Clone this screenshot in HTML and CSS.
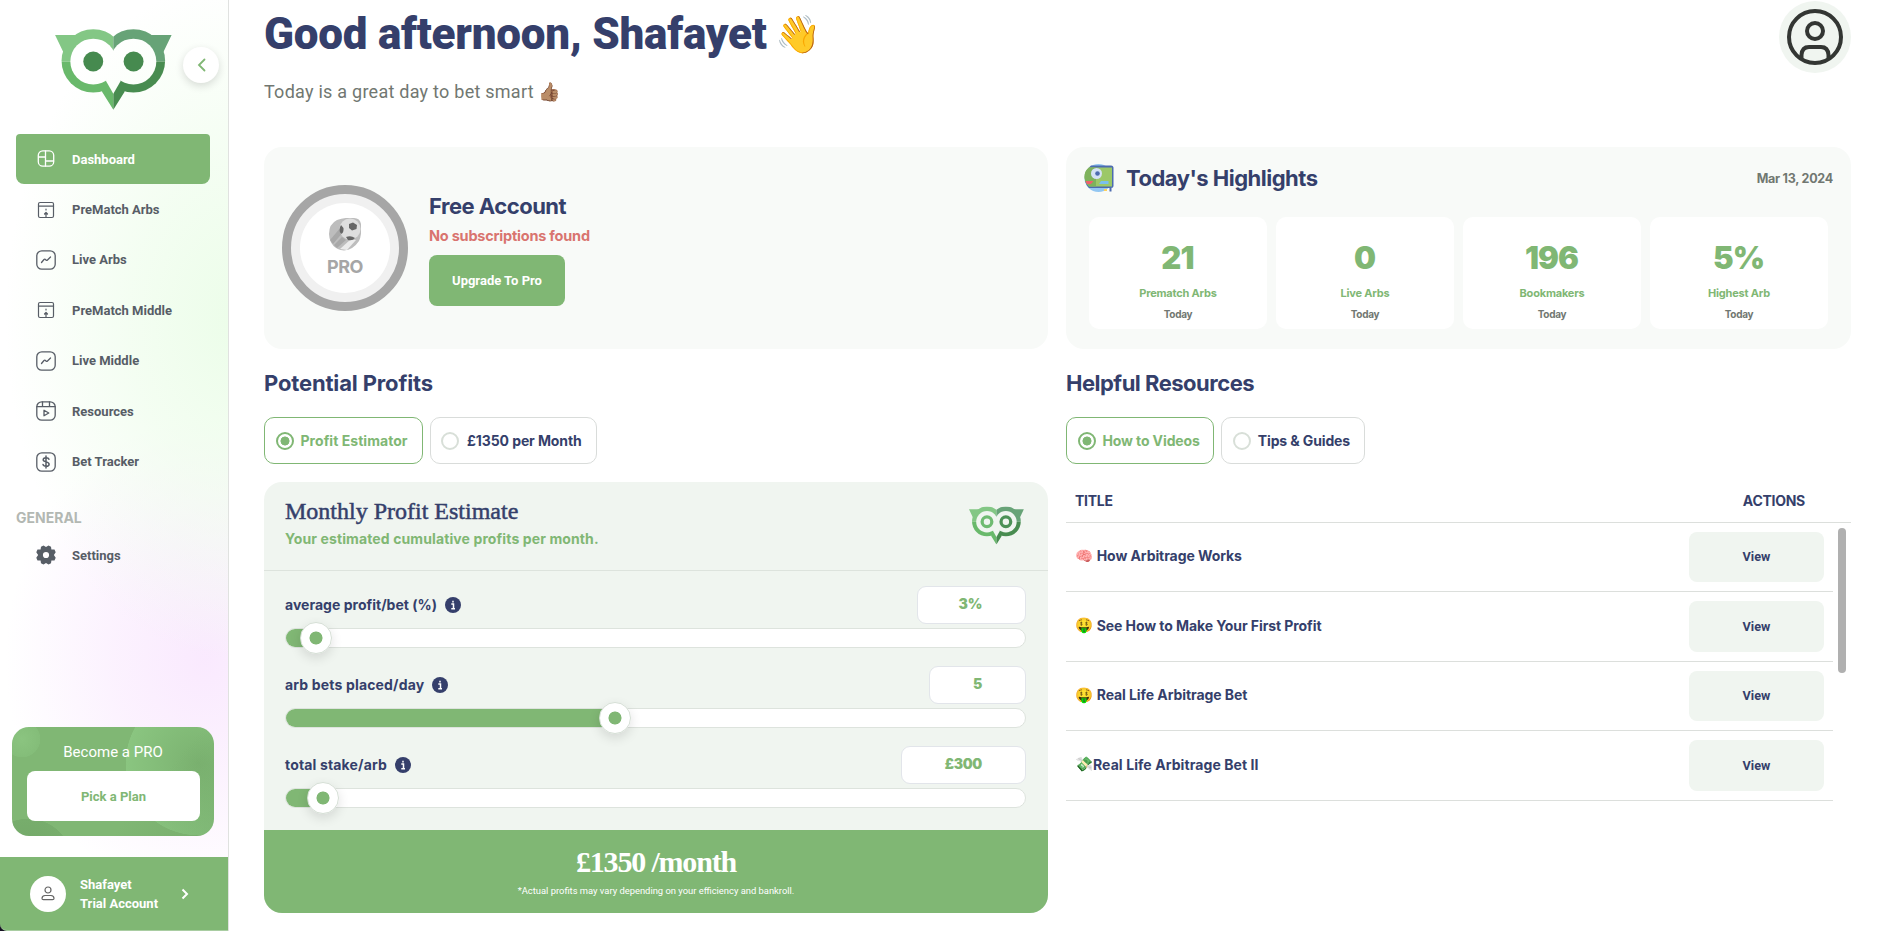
FILE: index.html
```
<!DOCTYPE html>
<html lang="en">
<head>
<meta charset="utf-8">
<title>Dashboard</title>
<link rel="stylesheet" href="styles.css">
</head>
<body>
<svg width="0" height="0" class="defs" aria-hidden="true">
  <defs>
    <mask id="owl-shape" maskUnits="userSpaceOnUse" x="160" y="80" width="360" height="255">
      <g fill="#fff">
        <circle cx="280" cy="182" r="95.500"/><circle cx="401" cy="182" r="95.500"/>
        <path d="M165 104H245L190 156ZM516 104H436L491 156ZM306 274L340.500 329L375 274L340 230Z"/>
      </g>
      <g fill="#000">
        <circle cx="280" cy="184" r="69"/><circle cx="401" cy="184" r="69"/>
        <path d="M318 242L340.500 281L363 242L340.500 190Z"/>
      </g>
    </mask>
    <symbol id="owl-body" viewBox="165 86 352 244">
      <g mask="url(#owl-shape)">
        <path fill="#83c785" d="M160 80H340.500V184H160Z"/><path fill="#67a377" d="M340.500 80H520V184H340.500Z"/>
        <path fill="#69b96b" d="M160 184H340.500V335H160Z"/><path fill="#488c50" d="M340.500 184H520V335H340.500Z"/>
      </g>
    </symbol>
    <symbol id="i-calendar" viewBox="0 0 20 20">
      <rect x="2.500" y="2.500" width="15" height="15" rx="1.500"/><path d="M2.500 6.200H17.500M10 17V13M8.500 14L10 12.500L11.500 14"/><path d="M10 9v1"/>
    </symbol>
    <symbol id="i-activity" viewBox="0 0 20 20">
      <rect x=".8" y=".8" width="18.400" height="18.400" rx="5"/><path d="M5.500 12.500L8 9.500Q8.800 8.700 9.600 9.700Q10.500 11 11.500 10L14.500 7"/>
    </symbol>
    <symbol id="i-info" viewBox="0 0 16 16">
      <path d="M6.300 7H8.500V11.700M6.300 11.700H10M8 3.700V5.400"/>
    </symbol>
  </defs>
</svg>
<div class="app">
  <aside class="sidebar">
    <div class="brand">
      <svg class="owl" viewBox="165 86 352 244"><use href="#owl-body" x="165" y="86" width="352" height="244"/><circle cx="280" cy="184" r="30" fill="#468a4f"/><circle cx="401.500" cy="184" r="30" fill="#468a4f"/></svg>
      <button class="collapse"><svg viewBox="0 0 12 14" width="12" height="14"><path d="M9.500 1.500L4 7L9.500 12.500"/></svg></button>
    </div>
    <nav class="nav">
      <a class="item active"><svg class="ic" viewBox="0 0 20 20"><rect x="2.300" y="1.800" width="15.400" height="15.400" rx="4.500"/><path d="M9.500 2V17M2.500 8H9.500M9.500 12H17.500"/></svg>Dashboard</a>
      <a class="item"><svg class="ic thin"><use href="#i-calendar"/></svg>PreMatch Arbs</a>
      <a class="item"><svg class="ic"><use href="#i-activity"/></svg>Live Arbs</a>
      <a class="item"><svg class="ic thin"><use href="#i-calendar"/></svg>PreMatch Middle</a>
      <a class="item"><svg class="ic"><use href="#i-activity"/></svg>Live Middle</a>
      <a class="item"><svg class="ic" viewBox="0 0 20 20"><rect x=".8" y=".8" width="18.400" height="18.400" rx="5"/><path d="M1 5.700H19M6.500 1V5.500M13.500 1V5.500M8 9.300V14.800L12.800 12Z"/></svg>Resources</a>
      <a class="item"><svg class="ic" viewBox="0 0 20 20"><rect x=".8" y=".8" width="18.400" height="18.400" rx="5"/><path stroke-width="1.500" d="M13 7.300C12.500 5.500 7.200 5 7.200 7.700C7.200 10.500 13.100 9.200 13.100 12.200C13.100 15 7.400 14.800 7 12.400M10 4V16"/></svg>Bet Tracker</a>
    </nav>
    <div class="group">GENERAL</div>
    <a class="item settings"><svg class="ic gear" viewBox="0 0 20 20"><path fill-rule="evenodd" d="M7.500 .6L10 1.900L12.500 .6L15 1.700L15.400 4.500L18.500 4.600L19.700 7.200L17.900 10L19.700 12.800L18.500 15.400L15.400 15.500L15 18.300L12.500 19.400L10 18.100L7.500 19.400L5 18.300L4.600 15.500L1.500 15.400L.3 12.800L2.100 10L.3 7.200L1.500 4.600L4.600 4.500L5 1.700ZM10 6.900A3.100 3.100 0 1 0 10 13.100A3.100 3.100 0 1 0 10 6.900Z"/></svg>Settings</a>
    <div class="promo">
      <div class="promo-title">Become a PRO</div>
      <button class="plan">Pick a Plan</button>
    </div>
    <div class="account">
      <span class="face"><svg viewBox="0 0 14 16" width="14" height="16"><circle cx="7" cy="4" r="3"/><path d="M4 9.500H10Q13 9.700 13 12.500Q13 13.700 11.500 13.700H2.500Q1 13.700 1 12.500Q1 9.700 4 9.500Z"/></svg></span>
      <div class="who">Shafayet<br>Trial Account</div>
      <svg class="next" viewBox="0 0 8 12" width="8" height="12"><path d="M1.500 1.500L6 6L1.500 10.500"/></svg>
    </div>
  </aside>

  <main class="main">
    <header class="top">
      <div>
        <h1>Good afternoon, Shafayet <span class="wave">👋</span></h1>
        <p class="sub">Today is a great day to bet smart <span class="thumb-up">👍🏽</span></p>
      </div>
      <span class="avatar"><svg viewBox="0 0 56 56" width="56" height="56"><circle cx="28" cy="28" r="26"/><circle cx="28" cy="22" r="8"/><path d="M14.500 49.500V46Q15 38 22 38H34Q41 38 41.500 46V49.500"/></svg></span>
    </header>

    <section class="grid">
      <div class="card plan-card">
        <div class="badge"><div class="badge-in">
          <svg viewBox="0 0 32 33" width="32" height="33"><path fill="#bdbdbd" d="M0 16Q0 6 8 2Q17-1 25 0Q31 0 32 6Q33 17 30 23Q24 32 15 32.500Q1 31 0 16Z"/><path fill="#a8a8a8" d="M1 22L12 9L15 13L4 26ZM5 27L13 19L17 22L8 30Z"/><path fill="#ececec" d="M11 31L22 21L27 22L18 32Z"/><circle cx="21" cy="11" r="10.500" fill="#dedede"/><path fill="#666" d="M20 6L24 4.500L28 7L27.500 11L23 12.500L20 10ZM12 7Q9 12 12 16Q15 15 14.500 10ZM17 19Q22 17 26 20Q24 23 19 22Z"/></svg>
          <b>PRO</b></div></div>
        <div class="plan-info">
          <h2>Free Account</h2>
          <p class="warn">No subscriptions found</p>
          <button class="upgrade">Upgrade To Pro</button>
        </div>
      </div>
      <div class="card highlights">
        <div class="hl-head">
          <svg viewBox="0 0 30 30" width="30" height="30"><circle cx="14.500" cy="15" r="14" fill="#93c7f2"/><path fill="#4c6bb0" d="M7 2.500H27Q29.500 2.500 29.500 5V22.500Q29.500 25 27 25H5Q2 22 1 18L2 8Z"/><path fill="#9cc868" d="M5 4.500H28V23.500H5Q.5 19 .5 14Q.5 8 5 4.500Z"/><path fill="#7eb25c" d="M5 4.500H12V23.500H5Q.5 19 .5 14Q.5 8 5 4.500Z"/><circle cx="12.500" cy="10.500" r="5.500" fill="#d4e2f5"/><circle cx="13.500" cy="10.500" r="2.300" fill="#4c6bb0"/><path fill="#f0616d" d="M1.500 18H9.500L7 21H2.800Z"/><path fill="#79c0ee" d="M17 18H24.500V21H15Z"/><path fill="#4c6bb0" d="M25.500 25H27.500V28.500H25.500Z"/><path fill="#ffd15c" d="M20 26H23V28H20Z"/></svg>
          <h2>Today's Highlights</h2><span class="date">Mar 13, 2024</span>
        </div>
        <div class="stats">
          <div class="stat"><b>21</b><i>Prematch Arbs</i><em>Today</em></div>
          <div class="stat"><b>0</b><i>Live Arbs</i><em>Today</em></div>
          <div class="stat"><b>196</b><i>Bookmakers</i><em>Today</em></div>
          <div class="stat"><b>5%</b><i>Highest Arb</i><em>Today</em></div>
        </div>
      </div>
    </section>

    <section class="grid">
      <div>
        <h2 class="sec first">Potential Profits</h2>
        <div class="tabs wide"><span class="tab on"><i class="radio"></i>Profit Estimator</span><span class="tab"><i class="radio"></i>£1350 per Month</span></div>
        <div class="panel">
          <div class="panel-head">
            <div><h3>Monthly Profit Estimate</h3><p>Your estimated cumulative profits per month.</p></div>
            <svg class="owl-small" viewBox="165 86 352 244"><use href="#owl-body" x="165" y="86" width="352" height="244"/><circle cx="280" cy="184" r="31" fill="none" stroke="#6fbb71" stroke-width="21"/><circle cx="401" cy="184" r="31" fill="none" stroke="#4c9156" stroke-width="21"/></svg>
          </div>
          <div class="controls">
            <div class="ctl"><div class="ctl-top"><span>average profit/bet (%)</span><i class="info"><svg><use href="#i-info"/></svg></i><b class="value v-pct">3%</b></div>
              <div class="track"><div class="fill" style="width:30px"><span class="knob"></span></div></div></div>
            <div class="ctl"><div class="ctl-top loose"><span>arb bets placed/day</span><i class="info"><svg><use href="#i-info"/></svg></i><b class="value v-num">5</b></div>
              <div class="track"><div class="fill" style="width:329px"><span class="knob"></span></div></div></div>
            <div class="ctl"><div class="ctl-top loose"><span>total stake/arb</span><i class="info"><svg><use href="#i-info"/></svg></i><b class="value v-cash">£300</b></div>
              <div class="track"><div class="fill" style="width:37px"><span class="knob"></span></div></div></div>
          </div>
          <div class="panel-foot"><strong>£1350 /month</strong><small>*Actual profits may vary depending on your efficiency and bankroll.</small></div>
        </div>
      </div>
      <div>
        <h2 class="sec">Helpful Resources</h2>
        <div class="tabs"><span class="tab on"><i class="radio"></i>How to Videos</span><span class="tab"><i class="radio"></i>Tips &amp; Guides</span></div>
        <div class="thead"><span>TITLE</span><span>ACTIONS</span></div>
        <div class="tbody">
          <div class="rows">
            <div class="row"><span class="emo">🧠</span><span>How Arbitrage Works</span><button>View</button></div>
            <div class="row"><span class="emo">🤑</span><span>See How to Make Your First Profit</span><button>View</button></div>
            <div class="row"><span class="emo">🤑</span><span>Real Life Arbitrage Bet</span><button>View</button></div>
            <div class="row tight"><span class="emo">💸</span><span>Real Life Arbitrage Bet II</span><button>View</button></div>
          </div>
          <div class="scroll"></div>
        </div>
      </div>
    </section>
  </main>
</div>
</body>
</html>
```
FILE: styles.css
```
* { box-sizing: border-box; }
body { margin: 0; background: #fff; font-family: Roboto, "Liberation Sans", sans-serif; color: #353f6b; }
h1, h2, h3, p { margin: 0; }
button { border: 0; padding: 0; font-family: inherit; }
i, em { font-style: normal; }
.defs { position: absolute; }
.app { display: flex; height: 931px; overflow: hidden; }

/* Sidebar */
.sidebar {
  width: 229px; flex: none; display: flex; flex-direction: column;
  border-right: 1px solid #e0e2e0;
  background:
    linear-gradient(#151022, #151022) 0 100% / 8px 8px no-repeat,
    radial-gradient(ellipse 230px 340px at 235px 320px, rgba(234,253,231,.9), rgba(236,253,233,.6) 45%, rgba(240,253,238,0)),
    radial-gradient(ellipse 200px 240px at 205px 660px, rgba(249,231,254,.9), rgba(249,231,254,.55) 45%, rgba(249,231,254,0)),
    #fff;
}
.brand { height: 134px; display: flex; padding: 29px 0 0 55px; }
.owl { width: 117px; height: 81px; }
.collapse { width: 36px; height: 36px; margin: 18px 0 0 11px; border-radius: 50%; background: #fff; box-shadow: 0 3px 9px rgba(0,0,0,.14); display: grid; place-items: center; }
.collapse path { fill: none; stroke: #80b774; stroke-width: 1.8; stroke-linecap: round; }
.nav { padding-left: 16px; height: 354px; }
.item { display: flex; align-items: center; gap: 16px; width: 194px; height: 50.400px; padding-left: 20px; font-size: 13px; font-weight: 700; color: #575d66; }
.item.active { background: #80b774; color: #fff; border-radius: 4px 4px 8px 8px; }
.ic { width: 20px; height: 20px; margin-left: -.5px; margin-right: .5px; fill: none; stroke: currentColor; stroke-width: 1.300; stroke-linejoin: round; stroke-linecap: round; }
.thin { stroke-width: 1.200; }
.ic.gear { fill: currentColor; stroke: none; }
.group { height: 42px; padding: 20px 0 0 16px; font-family: Inter, sans-serif; font-size: 14px; line-height: 20px; font-weight: 700; color: #b3b8b3; }
.settings { margin-left: 16px; }
.promo {
  width: 202px; height: 109px; margin: 147px 0 0 12px; padding: 15px 15px 0; border-radius: 17px; text-align: center;
  background:
    radial-gradient(circle at 10px 12px, #8bc480 0, #84bd79 18px, transparent 18.500px),
    radial-gradient(circle at 16px 136px, #72a767 0, #77ad6c 44px, transparent 44.500px),
    linear-gradient(130deg, transparent 65%, rgba(96,145,88,.25) 100%),
    radial-gradient(circle at 186px 36px, #7bb270 0, #8ac580 72px, transparent 72.500px),
    #80b774;
}
.promo-title { color: #fff; font-size: 15px; line-height: 20px; height: 29px; }
.plan { width: 173px; height: 50px; border-radius: 8px; background: #fff; color: #80b774; font-size: 13px; font-weight: 700; }
.account { height: 74px; margin-top: auto; background: #80b774; border-bottom: 1px solid #a9cda2; border-bottom-left-radius: 7px; display: flex; align-items: center; padding-left: 30px; color: #fff; }
.face { width: 36px; height: 36px; border-radius: 50%; background: #fff; display: grid; place-items: center; }
.face svg { fill: none; stroke: #666; stroke-width: 1.200; }
.who { margin-left: 14px; width: 101px; font-size: 13px; line-height: 19px; font-weight: 700; }
.next { fill: none; stroke: #fff; stroke-width: 2; }

/* Main */
.main { flex: 1; padding: 0 50px 0 35px; }
.top { height: 147px; display: flex; justify-content: space-between; }
h1 { padding-top: 12px; font-size: 44px; line-height: 44px; height: 56px; white-space: nowrap; font-weight: 900; letter-spacing: -.250px; }
.wave { font-size: 37px; margin-left: -2px; vertical-align: 2px; font-weight: 400; line-height: 30px; }
.sub { margin-top: 24px; font-size: 18px; line-height: 24px; letter-spacing: .25px; color: #717771; }
.thumb-up { font-size: 18px; margin-left: -1px; }
.avatar { width: 72px; height: 72px; margin-top: 1px; border-radius: 50%; background: #f0f5f0; display: grid; place-items: center; }
.avatar svg { fill: none; stroke: #333633; stroke-width: 4; }
.grid { display: grid; grid-template-columns: 784px 785px; column-gap: 18px; }
.card { height: 202px; border-radius: 18px; background: #f8faf8; }
h2 { font-family: Inter, sans-serif; font-size: 22px; line-height: 26px; letter-spacing: -.500px; }
.plan-card { display: flex; align-items: center; padding-left: 18px; }
.badge { width: 126px; height: 126px; border-radius: 50%; border: 9px solid #a6a6a6; background: #f0f0f0; padding: 9px; }
.badge-in { width: 90px; height: 90px; border-radius: 50%; background: #fff; display: flex; flex-direction: column; align-items: center; padding-top: 15px; }
.badge b { margin-top: 6px; font-family: Inter, sans-serif; letter-spacing: -.400px; font-size: 18px; line-height: 20px; color: #a6a6a6; }
.plan-info { margin-left: 21px; height: 111px; }
.warn { margin: 7px 0 9px; font-family: Inter, sans-serif; font-size: 14.500px; line-height: 20px; font-weight: 700; letter-spacing: -.220px; color: #d9746f; }
.upgrade { width: 136px; height: 51px; border-radius: 8px; background: #80b774; color: #fff; font-size: 13px; font-weight: 700; display: block; }
.highlights { padding: 16px 18px 0 18px; }
.hl-head { display: flex; align-items: center; height: 30px; }
.hl-head h2 { margin-left: 12px; }
.date { margin-left: auto; font-family: Inter, sans-serif; font-size: 12.500px; letter-spacing: -.250px; font-weight: 700; color: #717771; }
.stats { display: grid; grid-template-columns: repeat(4, 178px); gap: 9px; margin: 24px 0 0 5px; }
.stat { height: 112px; border-radius: 10px; background: #fff; display: flex; flex-direction: column; align-items: center; padding-top: 23px; font-family: Inter, sans-serif; font-weight: 700; color: #80b774; }
.stat b { font-size: 31px; line-height: 36px; letter-spacing: -.900px; margin-left: -1px; }
.stat i { margin-top: 9px; font-size: 11px; line-height: 16px; letter-spacing: -.200px; }
.stat em { margin-top: 5px; font-size: 10px; line-height: 16px; letter-spacing: -.300px; color: #717771; }

.sec { height: 68px; padding-top: 21px; letter-spacing: -.500px; }
.sec.first { letter-spacing: -.150px; }
.tabs { display: flex; gap: 7px; }
.tab { height: 47px; border: 1px solid #d9dcda; border-radius: 10px; padding: 0 13.500px 0 10.500px; display: flex; align-items: center; gap: 7px; font-family: Inter, sans-serif; font-size: 14px; font-weight: 700; letter-spacing: -.120px; }
.wide .tab { padding-right: 14px; letter-spacing: .040px; }
.wide .tab + .tab { letter-spacing: -.100px; gap: 8px; }
.radio { width: 18px; height: 18px; border-radius: 50%; border: 2px solid #d8dfd8; }
.tab.on { border-color: #80b774; color: #80b774; }
.tab.on .radio { border-color: #80b774; background: radial-gradient(circle, #80b774 4.200px, #fff 4.800px); }

/* Estimator */
.panel { margin-top: 18px; height: 431px; border-radius: 18px; background: #f0f5f0; overflow: hidden; display: flex; flex-direction: column; }
.panel-head { height: 89px; border-bottom: 1px solid #dde3dd; padding: 15px 24px 0 21px; display: flex; justify-content: space-between; }
h3 { font: 400 24px/28px "Liberation Serif", serif; -webkit-text-stroke: .5px #353f6b; }
.panel-head p { margin-top: 4px; font-family: Inter, sans-serif; font-size: 14px; line-height: 20px; font-weight: 700; letter-spacing: .110px; color: #80b774; }
.owl-small { width: 55px; height: 39px; margin-top: 9px; }
.controls { padding: 15px 22px 0 21px; height: 259px; }
.ctl { height: 80.200px; }
.ctl-top { display: flex; align-items: center; height: 38px; font-family: Inter, sans-serif; font-size: 14px; font-weight: 700; letter-spacing: .020px; }
.ctl-top.loose { letter-spacing: .160px; }
.ctl-top > span { margin-top: -2px; }
.info { width: 16px; height: 16px; margin-left: 8px; border-radius: 50%; background: #353f6b; }
.info svg { display: block; width: 16px; height: 16px; fill: none; stroke: #fff; stroke-width: 1.500; }
.ctl-top .value { margin-left: auto; height: 38px; border: 1px solid #e2e5ea; border-radius: 9px; background: #fff; color: #80b774; padding-right: 43px; line-height: 34px; text-align: right; letter-spacing: -.300px; }
.v-pct { width: 109px; }
.v-num { width: 97px; }
.v-cash { width: 125px; }
.track { margin-top: 4px; height: 20px; border: 1px solid #dde3dd; border-radius: 10px; background: #fff; }
.fill { position: relative; height: 18px; background: #80b774; border-radius: 9px; }
.knob { position: absolute; right: -16px; top: -7px; width: 32px; height: 32px; border-radius: 50%; border: 1px solid #d6dfd6; background: radial-gradient(circle, #80b774 6.200px, #fff 6.800px); box-shadow: 0 4px 12px rgba(0,0,0,.12); }
.panel-foot { flex: 1; background: #80b774; color: #fff; display: flex; flex-direction: column; align-items: center; padding-top: 15px; }
.panel-foot strong { font: 700 30px/34px "Liberation Serif", serif; letter-spacing: -1.180px; }
.panel-foot small { margin-top: 5px; font-size: 9.400px; line-height: 14px; }

/* Resources */
.thead { height: 58.500px; border-bottom: 1px solid #dcdfdc; display: flex; justify-content: space-between; align-items: flex-end; padding: 0 46px 11px 9px; font-family: Inter, sans-serif; font-size: 14px; line-height: 20px; font-weight: 700; letter-spacing: -.280px; }
.tbody { display: flex; }
.rows { width: 767px; }
.row { display: flex; align-items: center; height: 69.500px; border-bottom: 1px solid #dcdfdc; padding: 0 9px; font-family: Inter, sans-serif; font-size: 14px; font-weight: 700; letter-spacing: -.080px; white-space: nowrap; }
.row > span { margin-top: -2px; }
.emo { width: 21.700px; font-size: 14.500px; font-weight: 400; letter-spacing: 0; }
.tight .emo { width: 18px; }
.row.tight { letter-spacing: .080px; }
.row button { margin-left: auto; width: 135px; height: 50.500px; border-radius: 8px; background: #f0f5f0; color: #353f6b; font-family: Roboto, sans-serif; font-size: 12.700px; font-weight: 700; letter-spacing: 0; }
.scroll { width: 8px; height: 145px; margin: 5px 0 0 5px; border-radius: 4px; background: #b0b0b0; }
```
